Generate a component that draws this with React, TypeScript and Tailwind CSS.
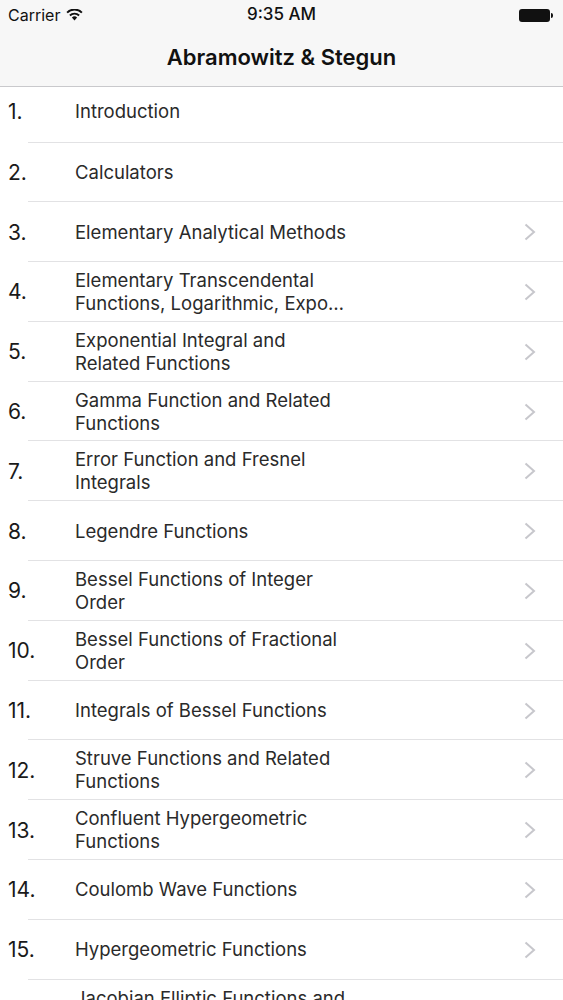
const chapters: { n: number; title: string; rest?: string; chevron?: boolean }[] = [
    { n: 1, title: 'Introduction', chevron: false },
    { n: 2, title: 'Calculators', chevron: false },
    { n: 3, title: 'Elementary Analytical Methods' },
    { n: 4, title: 'Elementary Transcendental', rest: 'Functions, Logarithmic, Exponential, Circular and Hyperbolic Functions' },
    { n: 5, title: 'Exponential Integral and Related Functions' },
    { n: 6, title: 'Gamma Function and Related Functions' },
    { n: 7, title: 'Error Function and Fresnel Integrals' },
    { n: 8, title: 'Legendre Functions' },
    { n: 9, title: 'Bessel Functions of Integer Order' },
    { n: 10, title: 'Bessel Functions of Fractional Order' },
    { n: 11, title: 'Integrals of Bessel Functions' },
    { n: 12, title: 'Struve Functions and Related Functions' },
    { n: 13, title: 'Confluent Hypergeometric Functions' },
    { n: 14, title: 'Coulomb Wave Functions' },
    { n: 15, title: 'Hypergeometric Functions' },
    { n: 16, title: 'Jacobian Elliptic Functions and Theta Functions' },
];

function Wifi() {
    return (
        <svg width="17" height="12" viewBox="0 0 17 12" className="ml-[6px]">
            <path d="M8.5 11.5 L5.9 8.6 A3.7 3.7 0 0 1 11.1 8.6 Z" fill="#111" />
            <path d="M3.9 6.5 A6.6 6.6 0 0 1 13.1 6.5" stroke="#111" strokeWidth="1.9" fill="none" />
            <path d="M1.1 3.6 A10.5 10.5 0 0 1 15.9 3.6" stroke="#111" strokeWidth="1.9" fill="none" />
        </svg>
    );
}

function Battery() {
    return (
        <div className="flex items-center">
            <div className="w-[31px] h-[13px] rounded-[3px] bg-[#111]" />
            <div className="w-[2px] h-[5px] rounded-r-sm bg-[#111] ml-[1px]" />
        </div>
    );
}

function Chevron() {
    return (
        <svg width="12" height="18" viewBox="0 0 12 18" className="mr-[27px] shrink-0">
            <polyline points="1.5,1.5 10,9 1.5,16.5" fill="none" stroke="#c7c7cc" strokeWidth="2" />
        </svg>
    );
}

function Row({ n, title, rest, chevron = true, first }: { n: number; title: string; rest?: string; chevron?: boolean; first?: boolean }) {
    return (
        <div className={`relative flex items-center ${first ? 'h-[55.5px] pb-[7px]' : 'h-[59.8px]'}`}>
            <div className="w-[75px] pl-[8px] text-[21px] text-[#1a1a1a] leading-none">{n}.</div>
            {rest ? (
                <div className="w-[272px] text-[18.5px] leading-[23px] text-[#2a2a2a]">
                    <div className="whitespace-nowrap">{title}</div>
                    <div className="whitespace-nowrap overflow-hidden text-ellipsis">{rest}</div>
                </div>
            ) : (
                <div className="w-[272px] text-[18.5px] leading-[23px] text-[#2a2a2a] line-clamp-2">{title}</div>
            )}
            <div className="flex-1" />
            {chevron && <Chevron />}
            <div className="absolute bottom-0 left-[28px] right-0 h-px bg-[#e2e2e4]" />
        </div>
    );
}

export default function App() {
    return (
        <div className="w-[563px] h-[1000px] overflow-hidden bg-white" style={{ fontFamily: 'Inter, "Liberation Sans", sans-serif' }}>
            <div className="bg-[#f7f7f7] border-b border-[#c9c9cc]">
                <div className="h-[30px] relative flex items-center pl-[8px] pr-[10px] text-[16px] text-[#111]">
                    <span>Carrier</span>
                    <Wifi />
                    <span className="absolute left-0 right-0 text-center text-[17px] font-medium">9:35 AM</span>
                    <div className="flex-1" />
                    <div className="relative"><Battery /></div>
                </div>
                <div className="h-[56px] flex items-center justify-center pb-[1px] text-[22px] font-semibold text-[#111]">
                    Abramowitz &amp; Stegun
                </div>
            </div>
            {chapters.map((c, i) => (
                <Row key={c.n} n={c.n} title={c.title} rest={c.rest} chevron={c.chevron} first={i === 0} />
            ))}
        </div>
    );
}
